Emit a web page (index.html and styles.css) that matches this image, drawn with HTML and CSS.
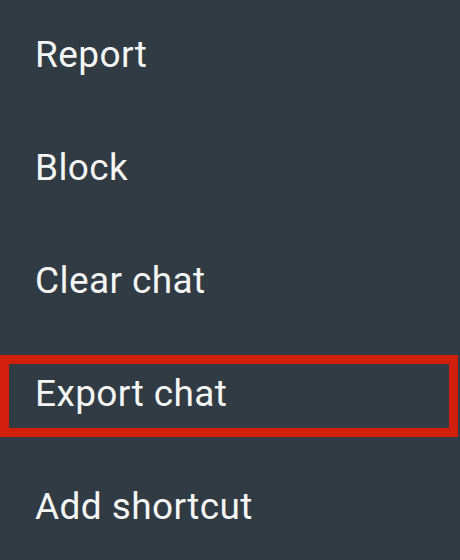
FILE: index.html
```html
<!DOCTYPE html>
<html>
<head>
<meta charset="utf-8">
<link rel="stylesheet" href="styles.css">
</head>
<body>
<ul class="menu">
  <li class="item">Report</li>
  <li class="item">Block</li>
  <li class="item">Clear chat</li>
  <li class="item item-highlight">Export chat</li>
  <li class="item">Add shortcut</li>
</ul>
</body>
</html>
```

FILE: styles.css
```css
html, body {
  margin: 0;
  padding: 0;
  background: #313b43;
  width: 460px;
  height: 560px;
  overflow: hidden;
}
.menu {
  list-style: none;
  margin: 0;
  padding: 0;
  font-family: Roboto, "Noto Sans", sans-serif;
  font-size: 37px;
  letter-spacing: 0.4px;
  color: #f4f5f5;
}
.item {
  line-height: 42px;
  padding: 34px 0 37px 35px;
  white-space: nowrap;
}
.item-highlight {
  margin: 16px 2px 15px 0;
  border: 9px solid #d11f0b;
  padding: 9px 0 13px 26px;
}
```
